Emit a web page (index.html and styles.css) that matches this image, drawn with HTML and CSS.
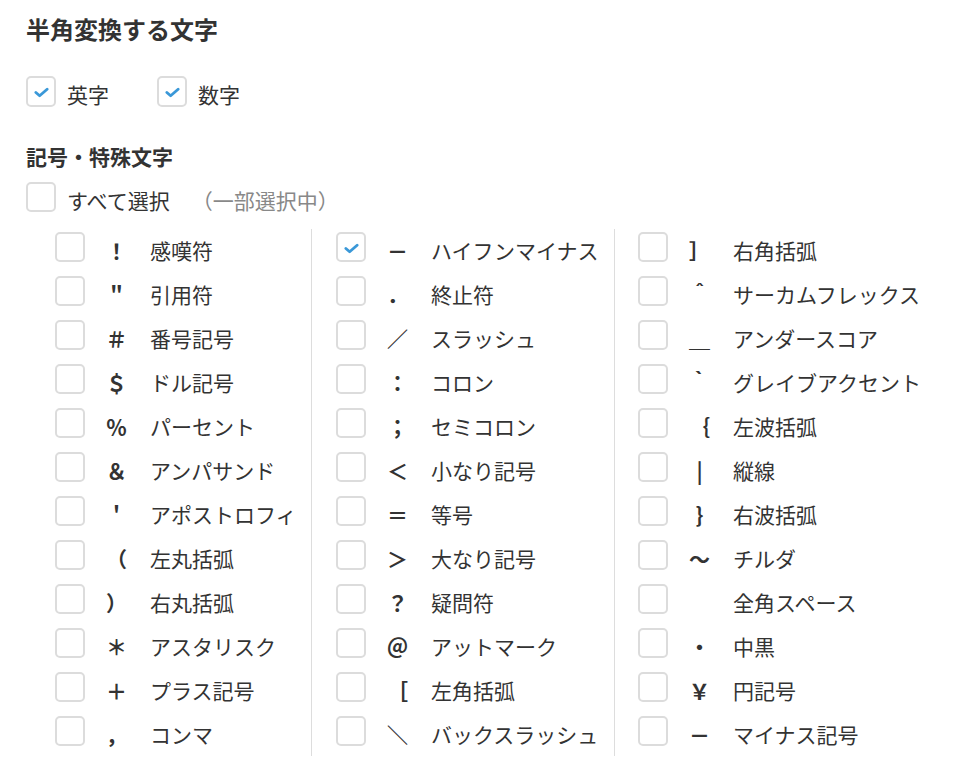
FILE: index.html
```html
<!DOCTYPE html>
<html>
<head>
<meta charset="utf-8">
<meta name="viewport" content="width=device-width, initial-scale=1">
<link rel="stylesheet" href="styles.css">
</head>
<body>

<h2 class="title">半角変換する文字</h2>

<div class="kinds">
  <label class="item"><span class="cb checked"><svg viewBox="0 0 16 11"><polyline points="2,5.5 6,9 14,2"/></svg></span><span class="txt">英字</span></label>
  <label class="item"><span class="cb checked"><svg viewBox="0 0 16 11"><polyline points="2,5.5 6,9 14,2"/></svg></span><span class="txt">数字</span></label>
</div>

<h3 class="sub">記号・特殊文字</h3>
<div class="select-all">
  <label class="item"><span class="cb"></span><span class="txt">すべて選択</span></label>
  <span class="txt partial">（一部選択中）</span>
</div>

<div class="symbols">
  <div class="col">
    <div class="row"><span class="cb"></span><span class="sym">！</span><span class="name">感嘆符</span></div>
    <div class="row"><span class="cb"></span><span class="sym">＂</span><span class="name">引用符</span></div>
    <div class="row"><span class="cb"></span><span class="sym">＃</span><span class="name">番号記号</span></div>
    <div class="row"><span class="cb"></span><span class="sym">＄</span><span class="name">ドル記号</span></div>
    <div class="row"><span class="cb"></span><span class="sym">％</span><span class="name">パーセント</span></div>
    <div class="row"><span class="cb"></span><span class="sym">＆</span><span class="name">アンパサンド</span></div>
    <div class="row"><span class="cb"></span><span class="sym">＇</span><span class="name">アポストロフィ</span></div>
    <div class="row"><span class="cb"></span><span class="sym">（</span><span class="name">左丸括弧</span></div>
    <div class="row"><span class="cb"></span><span class="sym">）</span><span class="name">右丸括弧</span></div>
    <div class="row"><span class="cb"></span><span class="sym">＊</span><span class="name">アスタリスク</span></div>
    <div class="row"><span class="cb"></span><span class="sym">＋</span><span class="name">プラス記号</span></div>
    <div class="row"><span class="cb"></span><span class="sym">，</span><span class="name">コンマ</span></div>
  </div>
  <div class="col">
    <div class="row"><span class="cb checked"><svg viewBox="0 0 16 11"><polyline points="2,5.5 6,9 14,2"/></svg></span><span class="sym">－</span><span class="name">ハイフンマイナス</span></div>
    <div class="row"><span class="cb"></span><span class="sym">．</span><span class="name">終止符</span></div>
    <div class="row"><span class="cb"></span><span class="sym">／</span><span class="name">スラッシュ</span></div>
    <div class="row"><span class="cb"></span><span class="sym">：</span><span class="name">コロン</span></div>
    <div class="row"><span class="cb"></span><span class="sym">；</span><span class="name">セミコロン</span></div>
    <div class="row"><span class="cb"></span><span class="sym">＜</span><span class="name">小なり記号</span></div>
    <div class="row"><span class="cb"></span><span class="sym">＝</span><span class="name">等号</span></div>
    <div class="row"><span class="cb"></span><span class="sym">＞</span><span class="name">大なり記号</span></div>
    <div class="row"><span class="cb"></span><span class="sym">？</span><span class="name">疑問符</span></div>
    <div class="row"><span class="cb"></span><span class="sym">＠</span><span class="name">アットマーク</span></div>
    <div class="row"><span class="cb"></span><span class="sym">［</span><span class="name">左角括弧</span></div>
    <div class="row"><span class="cb"></span><span class="sym">＼</span><span class="name">バックスラッシュ</span></div>
  </div>
  <div class="col">
    <div class="row"><span class="cb"></span><span class="sym">］</span><span class="name">右角括弧</span></div>
    <div class="row"><span class="cb"></span><span class="sym">＾</span><span class="name">サーカムフレックス</span></div>
    <div class="row"><span class="cb"></span><span class="sym">＿</span><span class="name">アンダースコア</span></div>
    <div class="row"><span class="cb"></span><span class="sym">｀</span><span class="name">グレイブアクセント</span></div>
    <div class="row"><span class="cb"></span><span class="sym">｛</span><span class="name">左波括弧</span></div>
    <div class="row"><span class="cb"></span><span class="sym">|</span><span class="name">縦線</span></div>
    <div class="row"><span class="cb"></span><span class="sym">}</span><span class="name">右波括弧</span></div>
    <div class="row"><span class="cb"></span><span class="sym">～</span><span class="name">チルダ</span></div>
    <div class="row"><span class="cb"></span><span class="sym">　</span><span class="name">全角スペース</span></div>
    <div class="row"><span class="cb"></span><span class="sym">・</span><span class="name">中黒</span></div>
    <div class="row"><span class="cb"></span><span class="sym">￥</span><span class="name">円記号</span></div>
    <div class="row"><span class="cb"></span><span class="sym">－</span><span class="name">マイナス記号</span></div>
  </div>
</div>

</body>
</html>
```

FILE: styles.css
```css
/* Page base */
body {
    margin: 0;
    padding: 0 26px;
    background: #fff;
    color: #333;
    font-family: "Noto Sans CJK JP", "Noto Sans", sans-serif;
    font-size: 21px;
    line-height: 30px;
}

.title {
    margin: 11px 0 0;
    font-size: 24px;
    line-height: 36px;
    font-weight: 700;
}

.sub {
    margin: 34px 0 0;
    font-size: 21px;
    line-height: 30px;
    font-weight: 700;
}

/* Checkbox with label; text sits a little below the box centre */
.item {
    display: flex;
    align-items: flex-start;
    gap: 11px;
    height: 31px;
}

.txt {
    padding-top: 3px;
}

.kinds {
    display: flex;
    gap: 48px;
    margin-top: 29px;
}

.select-all {
    display: flex;
    align-items: flex-start;
    height: 30px;
    margin-top: 11px;
}

.partial {
    margin-left: 22px;
    color: #888;
}

/* The box itself */
.cb {
    flex: none;
    display: flex;
    align-items: center;
    justify-content: center;
    width: 30px;
    height: 30px;
    box-sizing: border-box;
    border: 2px solid #dcdcdc;
    border-radius: 5px;
    background: #fff;
}

.kinds .cb {
    height: 31px;
}

.cb svg {
    width: 15px;
    height: 11px;
    margin-top: 2px;
}

.cb polyline {
    fill: none;
    stroke: #3a98d8;
    stroke-width: 3;
    stroke-linecap: round;
    stroke-linejoin: round;
}

/* Symbol grid */
.symbols {
    display: grid;
    grid-template-columns: 286px 303px 1fr;
    margin-top: 17px;
}

.col {
    padding: 3px 0 10px 24px;
    border-right: 1px solid #ddd;
}

.col:first-child {
    padding-left: 29px;
}

.col:last-child {
    padding-left: 23px;
    border-right: none;
}

.row {
    display: flex;
    align-items: flex-start;
    height: 30px;
    margin-bottom: 14px;
}

.row:last-child {
    margin-bottom: 0;
}

.sym {
    width: 21px;
    margin-left: 21px;
    padding-top: 3px;
    text-align: center;
    font-weight: 700;
}

.name {
    margin-left: 23px;
    padding-top: 3px;
    white-space: nowrap;
}
```
